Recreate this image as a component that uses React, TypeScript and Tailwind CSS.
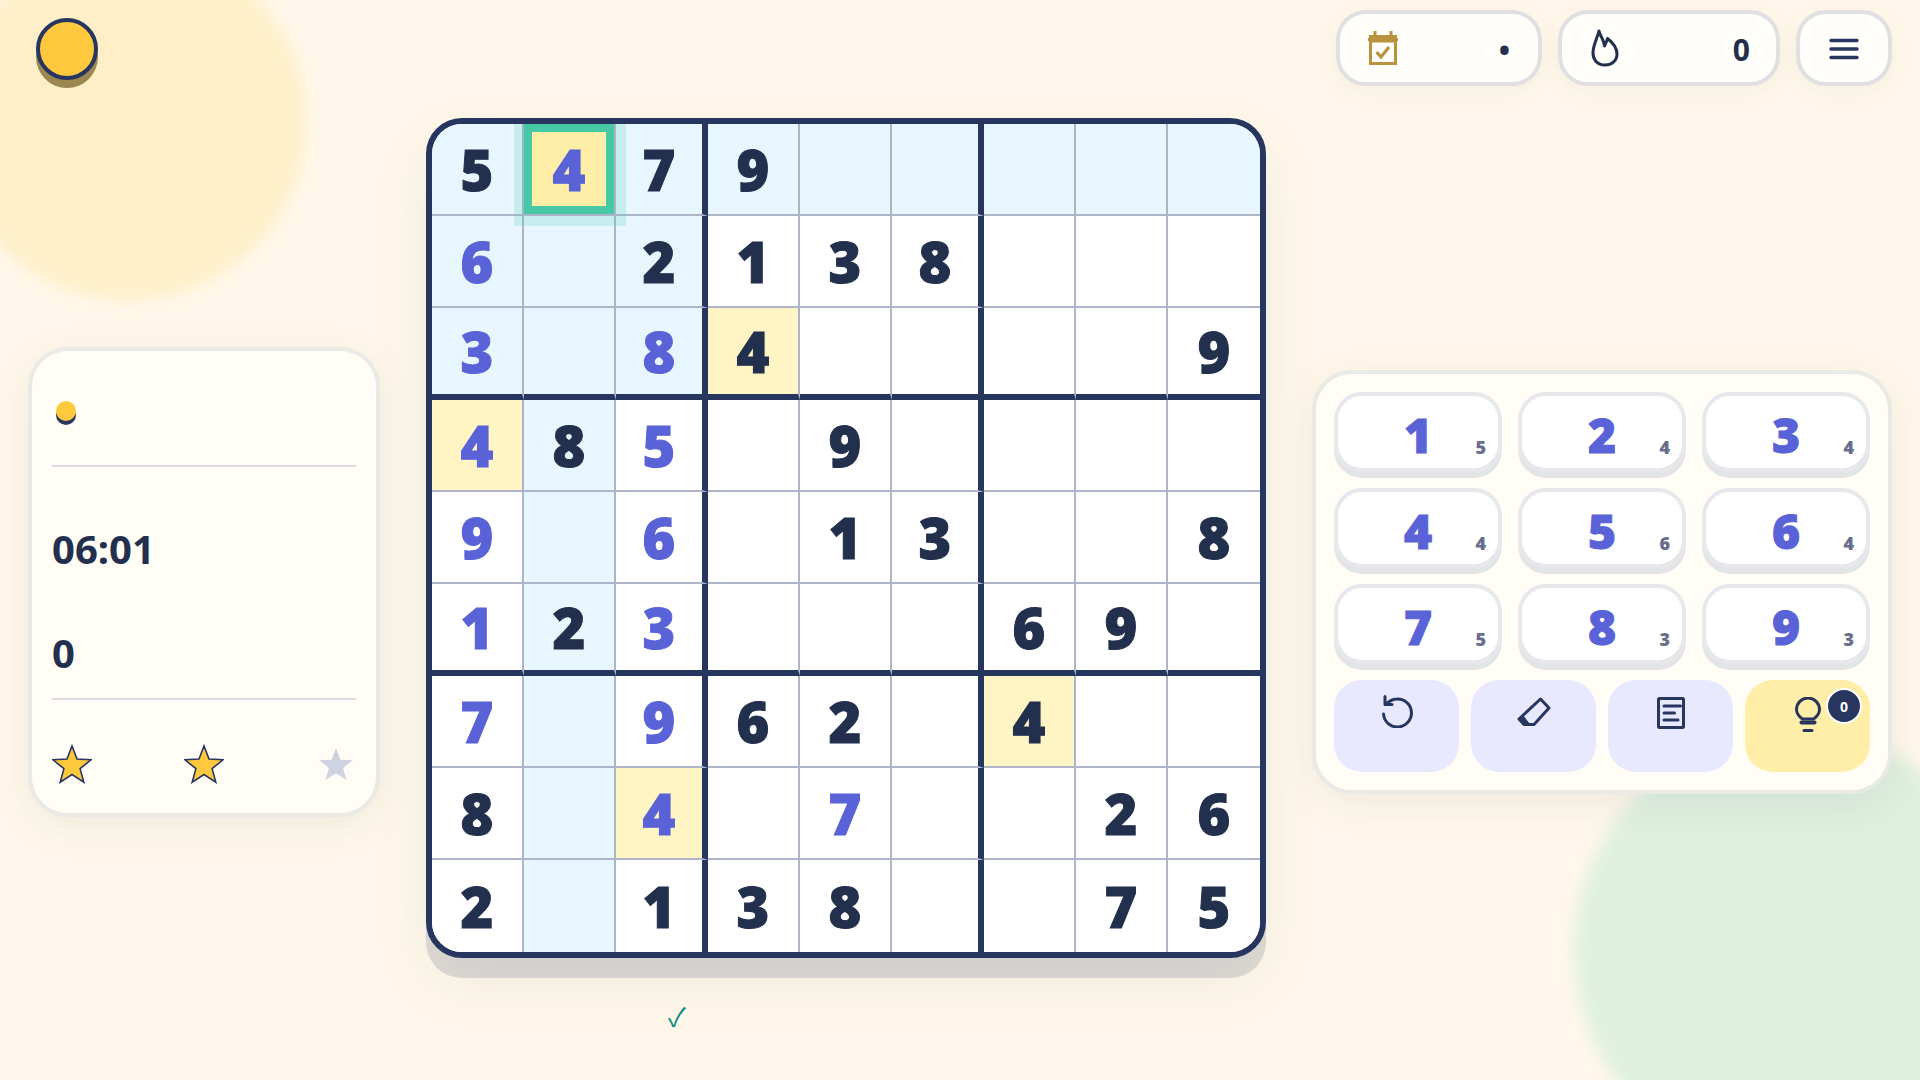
const board = [
  "5d 4b 7d 9d .. .. .. .. ..",
  "6b .. 2d 1d 3d 8d .. .. ..",
  "3b .. 8b 4d .. .. .. .. 9d",
  "4b 8d 5b .. 9d .. .. .. ..",
  "9b .. 6b .. 1d 3d .. .. 8d",
  "1b 2d 3b .. .. .. 6d 9d ..",
  "7b .. 9b 6d 2d .. 4d .. ..",
  "8d .. 4b .. 7b .. .. 2d 6d",
  "2d .. 1d 3d 8d .. .. 7d 5d",
].map((row) => row.split(" "));

const counts = [5, 4, 4, 4, 6, 4, 5, 3, 3];

function Cell({ value, r, c }: { value: string; r: number; c: number }) {
  const digit = value[0] === "." ? "" : value[0];
  const selected = r === 0 && c === 1;
  const same = digit === "4" && !selected;
  const peer = r === 0 || c === 1 || (r < 3 && c < 3);

  const bg = selected
    ? "bg-[#ffeea8] shadow-[inset_0_0_0_8px_#47c9a6,0_0_0_10px_rgba(71,201,166,0.2)] relative z-10"
    : same
      ? "bg-[#fff4c4]"
      : peer
        ? "bg-[#e8f6ff]"
        : "bg-white";
  const right = c === 8 ? "" : c === 2 || c === 5 ? "border-r-[6px] border-r-[#26365f]" : "border-r-2 border-r-[#aeb5c9]";
  const bottom = r === 8 ? "" : r === 2 || r === 5 ? "border-b-[6px] border-b-[#26365f]" : "border-b-2 border-b-[#aeb5c9]";
  const text = value[1] === "b" ? "text-[#5a62d8]" : "text-[#222f4d]";

  return (
    <div className={`h-[92px] flex items-center justify-center text-[56px] font-black leading-none [-webkit-text-stroke:1px_currentColor] ${bg} ${right} ${bottom} ${text}`}>
      {digit}
    </div>
  );
}

function Star({ on }: { on: boolean }) {
  return (
    <svg width="40" height="40" viewBox="0 0 40 40">
      <path
        d="M20 2 25 15.1 39 15.8 28.1 24.6 31.8 38.2 20 30.5 8.2 38.2 11.9 24.6 1 15.8 15 15.1Z"
        fill={on ? "#ffc83d" : "#cfd2e0"}
        stroke={on ? "#26365f" : "none"}
        strokeWidth="1.6"
        strokeLinejoin="miter"
        transform={on ? undefined : "translate(20 20) scale(0.88) translate(-20 -20)"}
      />
    </svg>
  );
}

function CalendarIcon() {
  return (
    <svg width="32" height="36" viewBox="0 0 32 36" fill="none" stroke="#b8923f" strokeWidth="3">
      <rect x="3.5" y="6.5" width="25" height="27" />
      <path d="M1 9.5h30M8 1v6M24 1v6" />
      <path d="M3.5 8h25v3h-25z" fill="#b8923f" />
      <path d="M9.5 22l4.5 5 8-10" strokeWidth="3.2" />
    </svg>
  );
}

function FlameIcon() {
  return (
    <svg width="30" height="38" viewBox="0 0 30 38" fill="none" stroke="#222f4d" strokeWidth="3" strokeLinejoin="round">
      <path d="M9 2C10 7 14 10 14.5 17C16 14 17 12 17.5 9.5C22 13 27 18 27 25C27 32 21.5 36 15 36C7 36 3 30.5 3 24C3 16 7 10 9 2Z" />
    </svg>
  );
}

function UndoIcon() {
  return (
    <svg width="34" height="34" viewBox="0 0 34 34" fill="none" stroke="#26365f" strokeWidth="3" strokeLinecap="round" strokeLinejoin="round">
      <path d="M3.5 20A14 14 0 1 0 17 5C13 5 10 6.5 6 10" />
      <path d="M5 2.5V10.5H12" />
    </svg>
  );
}

function EraserIcon() {
  return (
    <svg width="34" height="30" viewBox="0 0 34 30" fill="none" stroke="#26365f" strokeWidth="3" strokeLinejoin="round">
      <path d="M23.5 2 32 11 17 27.5H7L2 22Z" />
      <path d="M2 21.5 5.5 18 12 26.5 7 27Z" fill="#26365f" strokeWidth="1" />
    </svg>
  );
}

function NotesIcon() {
  return (
    <svg width="28" height="32" viewBox="0 0 28 32" fill="none" stroke="#26365f" strokeWidth="3" strokeLinecap="round">
      <rect x="1.5" y="1.5" width="25" height="29" rx="1" />
      <path d="M7 9h16.5M7 16h10.5M7 23h14" />
    </svg>
  );
}

function BulbIcon() {
  return (
    <svg width="26" height="36" viewBox="0 0 26 36" fill="none" stroke="#26365f" strokeWidth="3" strokeLinecap="round">
      <path d="M7.5 22C4 19.5 1.5 16.5 1.5 12.5A11.5 11.5 0 0 1 24.5 12.5C24.5 16.5 22 19.5 18.5 22Z" />
      <path d="M6.5 25.5H19.5" strokeWidth="4" />
      <path d="M9 33.5H17" />
    </svg>
  );
}

export default function App() {
  return (
    <div className="relative w-full h-[1080px] overflow-hidden bg-[#fff8ea] font-['Noto_Sans','Open_Sans',sans-serif] text-[#222f4d]">
      {/* background blobs */}
      <div className="absolute left-[-50px] top-[-56px] w-[356px] h-[356px] rounded-full bg-[#feefc9] blur-[8px]" />
      <div className="absolute left-[1574px] top-[730px] w-[440px] h-[440px] rounded-full bg-[#e0f0df] blur-[8px]" />

      <div className="relative flex flex-col">
        <header className="h-[118px] flex items-start justify-between pl-9 pr-7">
          <div className="mt-[18px] w-[62px] h-[62px] rounded-full bg-[#ffc83d] border-4 border-[#26365f] shadow-[0_8px_0_#9d8750]" />
          <div className="mt-[10px] flex gap-4">
            <div className="w-[206px] h-[76px] flex items-center justify-between pl-[27px] pr-7 bg-[#fffefa] border-4 border-[#e0e0e2] rounded-[30px] shadow-[0_6px_24px_rgba(38,54,95,0.05)]">
              <CalendarIcon />
              <span className="pt-1 text-[30px] font-bold leading-none">•</span>
            </div>
            <div className="w-[222px] h-[76px] flex items-center justify-between pl-7 pr-[26px] bg-[#fffefa] border-4 border-[#e0e0e2] rounded-[30px] shadow-[0_6px_24px_rgba(38,54,95,0.05)]">
              <FlameIcon />
              <span className="pt-1 text-[30px] font-bold leading-none">0</span>
            </div>
            <div className="w-[96px] h-[76px] flex items-center justify-center bg-[#fffefa] border-4 border-[#e0e0e2] rounded-[30px] shadow-[0_6px_24px_rgba(38,54,95,0.05)]">
              <svg width="30" height="24" viewBox="0 0 30 24" fill="none" stroke="#26365f" strokeWidth="3.4" strokeLinecap="round" className="mt-0.5">
                <path d="M2 3.5h26M2 12h26M2 20.5h26" />
              </svg>
            </div>
          </div>
        </header>

        <main className="h-[928px] flex items-center gap-[46px] pl-7">
          {/* stats */}
          <aside className="w-[352px] flex flex-col px-5 bg-[#fffdf6] border-4 border-[#e9e9e6] rounded-[40px] shadow-[0_10px_40px_rgba(38,54,95,0.08)]">
            <div className="mt-[50px] ml-1 w-5 h-5 rounded-full bg-[#ffc83d] shadow-[0_4px_0_#26365f]" />
            <div className="mt-11 h-0.5 bg-[#dcdde3]" />
            <div className="mt-14 text-[40px] font-bold leading-[52px]">06:01</div>
            <div className="mt-[52px] text-[40px] font-bold leading-[52px]">0</div>
            <div className="mt-[19px] h-0.5 bg-[#dcdde3]" />
            <div className="mt-11 mb-[29px] flex justify-between">
              <Star on />
              <Star on />
              <Star on={false} />
            </div>
          </aside>

          {/* board */}
          <section className="w-[840px] h-[928px] flex flex-col">
            <div className="grid grid-cols-9 overflow-hidden bg-white border-[6px] border-[#26365f] rounded-[36px] shadow-[0_20px_0_rgba(38,54,95,0.15),0_24px_60px_rgba(38,54,95,0.08)]">
              {board.map((row, r) =>
                row.map((value, c) => <Cell key={`${r}-${c}`} value={value} r={r} c={c} />)
              )}
            </div>
            <div className="mt-[38px] pl-[242px] text-[26px] leading-10 text-[#0b8f7f] font-['Noto_Sans_CJK_JP',sans-serif]">✓</div>
          </section>

          {/* number pad */}
          <aside className="w-[580px] p-[18px] bg-[#fffdf6] border-4 border-[#e9e9e6] rounded-[40px] shadow-[0_10px_40px_rgba(38,54,95,0.08)]">
            <div className="grid grid-cols-3 gap-4">
              {counts.map((count, i) => (
                <button
                  key={i}
                  className="relative h-20 flex items-center justify-center pt-[5px] bg-white border-4 border-[#e7e8ec] rounded-[28px] shadow-[0_6px_0_#e3e4e6] text-[48px] font-black leading-none text-[#5a62d8] [-webkit-text-stroke:1px_currentColor]"
                >
                  {i + 1}
                  <span className="absolute right-3 bottom-3 text-[18px] font-black leading-none text-[#676e8a] [-webkit-text-stroke:0]">{count}</span>
                </button>
              ))}
            </div>
            <div className="mt-4 grid grid-cols-4 gap-3">
              <button className="h-[92px] flex justify-center pt-3.5 bg-[#e8e8ff] rounded-[28px]">
                <UndoIcon />
              </button>
              <button className="h-[92px] flex justify-center pt-[17px] bg-[#e8e8ff] rounded-[28px]">
                <EraserIcon />
              </button>
              <button className="h-[92px] flex justify-center pt-[17px] bg-[#e8e8ff] rounded-[28px]">
                <NotesIcon />
              </button>
              <button className="relative h-[92px] flex justify-center pt-[17px] bg-[#ffeea8] rounded-[28px]">
                <BulbIcon />
                <span className="absolute right-2 top-2 w-9 h-9 flex items-center justify-center rounded-full bg-[#26365f] border-2 border-white text-[14px] font-bold text-white [-webkit-text-stroke:0]">0</span>
              </button>
            </div>
          </aside>
        </main>
      </div>
    </div>
  );
}
